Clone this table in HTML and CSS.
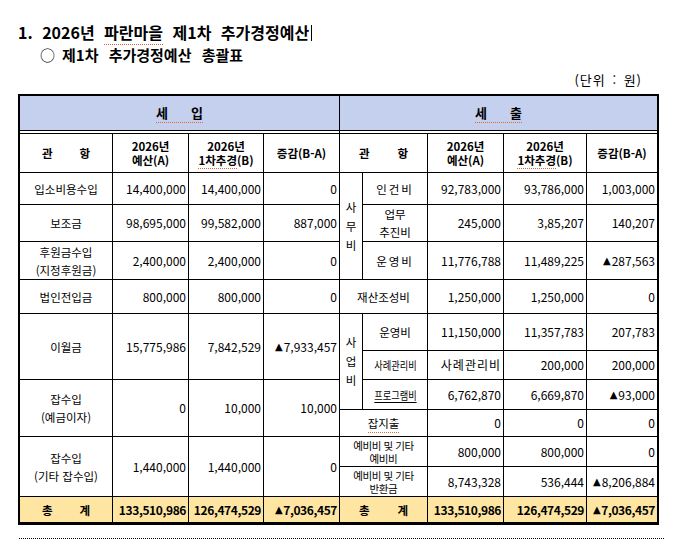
FILE: index.html
```html
<!DOCTYPE html>
<html lang="ko">
<head>
<meta charset="utf-8">
<title>2026년 파란마을 제1차 추가경정예산</title>
<link rel="stylesheet" href="styles.css">
</head>
<body>
<h1 class="title">1. 2026년 <span class="sp">파란마을</span> 제1차 추가경정예산<span class="caret"></span></h1>
<h2 class="subtitle"><span class="circle">○</span>제1차 추가경정예산 총괄표</h2>
<p class="unit">(단위 : 원)</p>

<div class="sheet">
  <div class="side left">
    <div class="cell head span-all"><span class="sp">세<span class="gap"></span>입</span></div>
    <div class="spacer span-all"></div>
    <div class="cell colhead"><span>관</span><span class="gap2"></span><span>항</span></div>
    <div class="cell colhead">2026년<br>예산(A)</div>
    <div class="cell colhead"><span>2026년<br><span class="sp">1차추경</span>(B)</span></div>
    <div class="cell colhead">증감(B-A)</div>

    <div class="cell">입소비용수입</div>
    <div class="cell num">14,400,000</div>
    <div class="cell num">14,400,000</div>
    <div class="cell num">0</div>

    <div class="cell">보조금</div>
    <div class="cell num">98,695,000</div>
    <div class="cell num">99,582,000</div>
    <div class="cell num">887,000</div>

    <div class="cell two">후원금수입<br>(지정후원금)</div>
    <div class="cell num">2,400,000</div>
    <div class="cell num">2,400,000</div>
    <div class="cell num">0</div>

    <div class="cell">법인전입금</div>
    <div class="cell num">800,000</div>
    <div class="cell num">800,000</div>
    <div class="cell num">0</div>

    <div class="cell">이월금</div>
    <div class="cell num">15,775,986</div>
    <div class="cell num">7,842,529</div>
    <div class="cell num"><span class="tri">▲</span>7,933,457</div>

    <div class="cell two">잡수입<br>(예금이자)</div>
    <div class="cell num">0</div>
    <div class="cell num">10,000</div>
    <div class="cell num">10,000</div>

    <div class="cell two">잡수입<br>(기타 잡수입)</div>
    <div class="cell num">1,440,000</div>
    <div class="cell num">1,440,000</div>
    <div class="cell num">0</div>

    <div class="cell total label"><span>총</span><span class="gap2"></span><span>계</span></div>
    <div class="cell total num">133,510,986</div>
    <div class="cell total num">126,474,529</div>
    <div class="cell total num"><span class="tri">▲</span>7,036,457</div>
  </div>

  <div class="side right">
    <div class="cell head span-all"><span class="sp">세<span class="gap"></span>출</span></div>
    <div class="spacer span-all"></div>
    <div class="cell colhead span2"><span>관</span><span class="gap3"></span><span>항</span></div>
    <div class="cell colhead">2026년<br>예산(A)</div>
    <div class="cell colhead"><span>2026년<br><span class="sp">1차추경</span>(B)</span></div>
    <div class="cell colhead">증감(B-A)</div>

    <div class="cell vert rows3">사<br>무<br>비</div>
    <div class="cell wide">인건비</div>
    <div class="cell num">92,783,000</div>
    <div class="cell num">93,786,000</div>
    <div class="cell num">1,003,000</div>

    <div class="cell two">업무<br>추진비</div>
    <div class="cell num">245,000</div>
    <div class="cell num">3,85,207</div>
    <div class="cell num">140,207</div>

    <div class="cell wide">운영비</div>
    <div class="cell num">11,776,788</div>
    <div class="cell num">11,489,225</div>
    <div class="cell num"><span class="tri">▲</span>287,563</div>

    <div class="cell span2">재산조성비</div>
    <div class="cell num">1,250,000</div>
    <div class="cell num">1,250,000</div>
    <div class="cell num">0</div>

    <div class="cell vert rows3">사<br>업<br>비</div>
    <div class="cell">운영비</div>
    <div class="cell num">11,150,000</div>
    <div class="cell num">11,357,783</div>
    <div class="cell num">207,783</div>

    <div class="cell"><span class="narrow">사례관리비</span></div>
    <div class="cell num spaced">사례관리비</div>
    <div class="cell num">200,000</div>
    <div class="cell num">200,000</div>

    <div class="cell"><span class="narrow uline">프로그램비</span></div>
    <div class="cell num">6,762,870</div>
    <div class="cell num">6,669,870</div>
    <div class="cell num"><span class="tri">▲</span>93,000</div>

    <div class="cell span2"><span class="sp">잡지출</span></div>
    <div class="cell num">0</div>
    <div class="cell num">0</div>
    <div class="cell num">0</div>

    <div class="cell span2 small">예비비 및 기타<br>예비비</div>
    <div class="cell num">800,000</div>
    <div class="cell num">800,000</div>
    <div class="cell num">0</div>

    <div class="cell span2 small">예비비 및 기타<br>반환금</div>
    <div class="cell num">8,743,328</div>
    <div class="cell num">536,444</div>
    <div class="cell num"><span class="tri">▲</span>8,206,884</div>

    <div class="cell total span2"><span>총</span><span class="gap3"></span><span>계</span></div>
    <div class="cell total num">133,510,986</div>
    <div class="cell total num">126,474,529</div>
    <div class="cell total num"><span class="tri">▲</span>7,036,457</div>
  </div>
</div>

<div class="dots"></div>
</body>
</html>
```
FILE: styles.css
```css
html, body {
  margin: 0;
  padding: 0;
  background: #fff;
}
body {
  font-family: "Noto Sans CJK KR", "Noto Sans", sans-serif;
  color: #000;
  width: 696px;
}

.title {
  margin: 0;
  padding: 22px 0 0 18px;
  font-size: 16px;
  line-height: 20px;
  font-weight: 700;
  word-spacing: 5px;
}
.caret {
  display: inline-block;
  width: 1px;
  height: 16px;
  background: #000;
  margin-left: 2px;
  vertical-align: -2px;
}
.sp {
  border-bottom: 1px dotted #e2662c;
  padding-bottom: 0;
}

.subtitle {
  margin: 3px 0 0 0;
  padding-left: 40px;
  font-size: 15px;
  line-height: 20px;
  font-weight: 700;
  word-spacing: 6px;
}
.circle {
  display: inline-block;
  width: 22px;
  font-weight: 400;
  font-size: 15px;
}

.unit {
  margin: 7px 0 0 0;
  padding-right: 54px;
  text-align: right;
  font-size: 13px;
  line-height: 16px;
  letter-spacing: 1px;
  word-spacing: 2px;
}

.sheet {
  display: flex;
  gap: 1px;
  margin: 6px 0 0 18px;
  width: 637px;
  background: #000;
  border-top: 2px solid #000;
  border-left: 2px solid #000;
  border-right: 2px solid #000;
  border-bottom: 3px solid #000;
}

.side {
  display: grid;
  gap: 1px;
  background: #000;
}
.left {
  width: 319px;
  grid-template-columns: 92px 75px 74px 75px;
  grid-template-rows: 34px 2px 38px 31px 36px 37px 33px 65px 56px 59px 25px;
}
.right {
  width: 317px;
  grid-template-columns: 22px 64px 75px 82px 70px;
  grid-template-rows: 34px 2px 38px 31px 36px 37px 33px 36px 28px 29px 26px 29px 29px 25px;
}

.span-all { grid-column: 1 / -1; }
.span2 { grid-column: span 2; }
.rows3 { grid-row: span 3; }

.spacer { background: #fff; }

.cell {
  background: #fff;
  display: flex;
  align-items: center;
  justify-content: center;
  text-align: center;
  font-size: 11.5px;
  line-height: 18px;
  white-space: nowrap;
  overflow: hidden;
}
.num {
  justify-content: flex-end;
  padding-right: 2px;
  font-size: 12px;
}
.head {
  background: #c5cfee;
  font-size: 13px;
  font-weight: 700;
}
.gap {
  display: inline-block;
  width: 23px;
}
.gap2 {
  display: inline-block;
  width: 27px;
}
.gap3 {
  display: inline-block;
  width: 28px;
}
.colhead {
  font-weight: 700;
  font-size: 11.5px;
  line-height: 14px;
}
.total {
  background: #fee6a2;
  font-weight: 700;
}
.total.num {
  letter-spacing: -0.4px;
}
.tri {
  font-family: "DejaVu Sans", sans-serif;
  font-size: 10px;
  margin-right: 1px;
}
.vert {
  line-height: 19px;
}
.wide {
  letter-spacing: 2px;
}
.spaced {
  letter-spacing: 1px;
}
.narrow {
  display: inline-block;
  transform: scaleX(0.8);
}
.uline {
  text-decoration: underline;
  text-underline-offset: 2px;
}
.small {
  font-size: 10.5px;
  line-height: 13px;
  letter-spacing: -0.4px;
}

.dots {
  margin: 13px 0 0 19px;
  width: 645px;
  border-top: 1px dotted #000;
}
```
